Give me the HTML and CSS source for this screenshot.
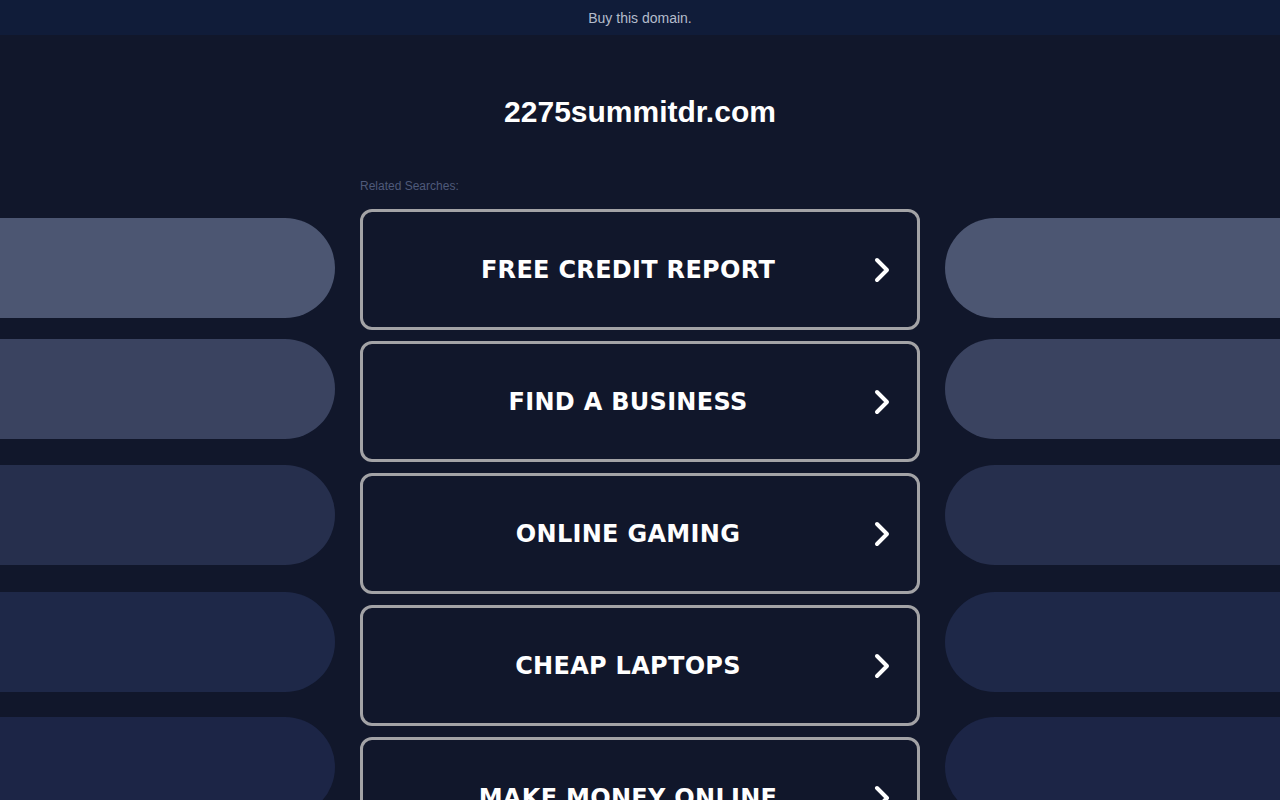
FILE: index.html
```html
<!DOCTYPE html>
<html>
<head>
<meta charset="utf-8">
<link rel="stylesheet" href="styles.css">
</head>
<body>
<div class="topbar">Buy this domain.</div>
<div class="stage">
  <div class="pills left">
    <div class="pill p1"></div>
    <div class="pill p2"></div>
    <div class="pill p3"></div>
    <div class="pill p4"></div>
    <div class="pill p5"></div>
  </div>
  <div class="pills right">
    <div class="pill p1"></div>
    <div class="pill p2"></div>
    <div class="pill p3"></div>
    <div class="pill p4"></div>
    <div class="pill p5"></div>
  </div>
  <main class="content">
    <h1 class="title">2275summitdr.com</h1>
    <div class="related">Related Searches:</div>
    <div class="links">
      <a class="link" href="#"><span class="label">FREE CREDIT REPORT</span><svg class="chev" viewBox="0 0 16 26"><path d="M3 3 L13 13 L3 23" fill="none" stroke="#fff" stroke-width="4" stroke-linecap="round" stroke-linejoin="round"/></svg></a>
      <a class="link" href="#"><span class="label">FIND A BUSINESS</span><svg class="chev" viewBox="0 0 16 26"><path d="M3 3 L13 13 L3 23" fill="none" stroke="#fff" stroke-width="4" stroke-linecap="round" stroke-linejoin="round"/></svg></a>
      <a class="link" href="#"><span class="label">ONLINE GAMING</span><svg class="chev" viewBox="0 0 16 26"><path d="M3 3 L13 13 L3 23" fill="none" stroke="#fff" stroke-width="4" stroke-linecap="round" stroke-linejoin="round"/></svg></a>
      <a class="link" href="#"><span class="label">CHEAP LAPTOPS</span><svg class="chev" viewBox="0 0 16 26"><path d="M3 3 L13 13 L3 23" fill="none" stroke="#fff" stroke-width="4" stroke-linecap="round" stroke-linejoin="round"/></svg></a>
      <a class="link" href="#"><span class="label">MAKE MONEY ONLINE</span><svg class="chev" viewBox="0 0 16 26"><path d="M3 3 L13 13 L3 23" fill="none" stroke="#fff" stroke-width="4" stroke-linecap="round" stroke-linejoin="round"/></svg></a>
    </div>
  </main>
</div>
</body>
</html>
```
FILE: styles.css
```css
html, body {
  margin: 0;
  padding: 0;
  background: #11172b;
  overflow: hidden;
  height: 800px;
}
body {
  font-family: "Liberation Sans", Arial, sans-serif;
  color: #fff;
}
.topbar {
  height: 35px;
  line-height: 36px;
  background: #101c39;
  color: #b4bccc;
  font-size: 14px;
  text-align: center;
}
.stage {
  position: relative;
  height: 765px;
}
.pills {
  position: absolute;
  top: 183px;
  width: 335px;
  display: flex;
  flex-direction: column;
}
.pills.left { left: 0; }
.pills.right { right: 0; }
.pill {
  height: 100px;
  flex: none;
}
.left .pill { border-radius: 0 50px 50px 0; }
.right .pill { border-radius: 50px 0 0 50px; }
.p1 { background: #4c5672; margin-bottom: 21px; }
.p2 { background: #3a4360; margin-bottom: 26px; }
.p3 { background: #262f4d; margin-bottom: 27px; }
.p4 { background: #1e2848; margin-bottom: 25px; }
.p5 { background: #1c2546; }
.content {
  width: 560px;
  margin: 0 auto;
  position: relative;
}
.title {
  margin: 0;
  padding-top: 57px;
  height: 40px;
  line-height: 40px;
  font-size: 30px;
  font-weight: bold;
  text-align: center;
  color: #fff;
}
.related {
  margin-top: 47px;
  font-size: 12px;
  line-height: 14px;
  color: #4f5a7a;
}
.links {
  margin-top: 16px;
  display: flex;
  flex-direction: column;
  gap: 11px;
}
.link {
  box-sizing: border-box;
  height: 121px;
  flex: none;
  border: 3px solid #a3a3a6;
  border-radius: 12px;
  display: flex;
  align-items: center;
  justify-content: center;
  position: relative;
  text-decoration: none;
  color: #fff;
  padding-right: 24px;
  padding-top: 1px;
}
.label {
  font-family: "DejaVu Sans", Verdana, sans-serif;
  font-weight: 700;
  font-size: 24px;
  letter-spacing: 0.3px;
  white-space: nowrap;
}
.chev {
  position: absolute;
  right: 27px;
  top: 50%;
  width: 16px;
  height: 26px;
  margin-top: -13px;
}
```
